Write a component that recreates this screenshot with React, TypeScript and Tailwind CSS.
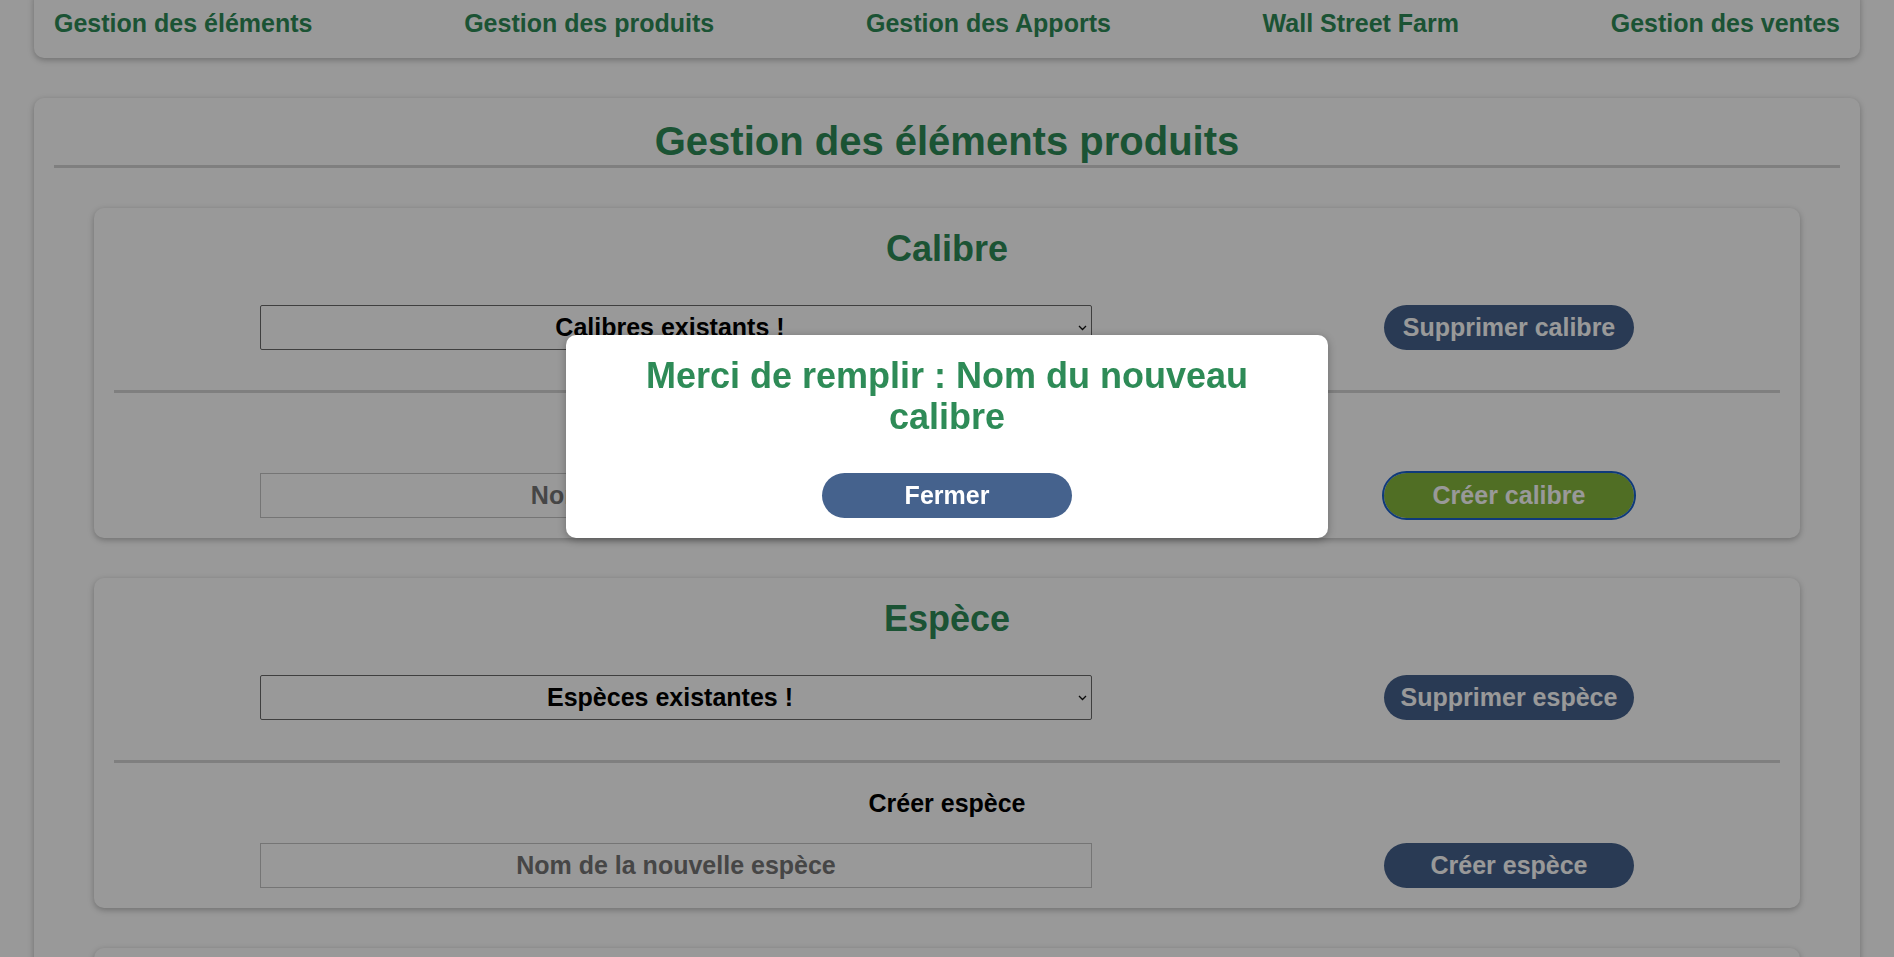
import React from "react";

type SectionProps = {
  title: string;
  selectLabel: string;
  deleteLabel: string;
  createTitle: string;
  createLabel: string;
  placeholder: string;
  focused?: boolean;
};

function Chevron() {
  return (
    <svg
      width="9"
      height="6"
      viewBox="0 0 9 6"
      className="pointer-events-none absolute right-[5px] top-1/2 -translate-y-1/2"
    >
      <path d="M1 1 L4.5 4.5 L8 1" fill="none" stroke="#111" strokeWidth="1.3" />
    </svg>
  );
}

function Section({ title, selectLabel, deleteLabel, createTitle, createLabel, placeholder, focused }: SectionProps) {
  return (
    <div className="mx-10 rounded-[10px] bg-white px-5 pb-5 pt-5 shadow-[0_2px_6px_rgba(0,0,0,0.28)]">
      <h2 className="text-center text-[36px] font-bold leading-[42px] text-[#2e8b57]">{title}</h2>
      <div className="mt-[35px] flex items-center justify-around">
        <div className="relative w-[832px]">
          <select className="h-[45px] w-full appearance-none rounded-[2px] border border-[#696969] bg-white pr-[12px] text-center text-[25px] font-bold text-black [text-align-last:center]">
            <option>{selectLabel}</option>
          </select>
          <Chevron />
        </div>
        <button className="h-[45px] w-[250px] rounded-full bg-[#45628d] text-[25px] font-bold text-white">
          {deleteLabel}
        </button>
      </div>
      <div className="mt-10 h-[3px] bg-[#d4d4d4]" />
      <div className="mt-[26px] text-center text-[25px] font-bold leading-[29px] text-black">{createTitle}</div>
      <div className="mt-[25px] flex items-center justify-around">
        <input
          className="h-[45px] w-[832px] border border-[#c4c4c4] bg-white text-center text-[25px] font-bold text-black placeholder:text-[#757575]"
          placeholder={placeholder}
        />
        <button
          className={
            focused
              ? "h-[45px] w-[250px] rounded-full bg-[#85b73c] text-[25px] font-bold text-white outline-2 outline-solid outline-[#1961cb]"
              : "h-[45px] w-[250px] rounded-full bg-[#45628d] text-[25px] font-bold text-white"
          }
        >
          {createLabel}
        </button>
      </div>
    </div>
  );
}

export default function App() {
  const nav = ["Gestion des éléments", "Gestion des produits", "Gestion des Apports", "Wall Street Farm", "Gestion des ventes"];
  return (
    <div className="relative min-h-[957px] overflow-hidden bg-white px-[34px] font-['Liberation_Sans',Arial,sans-serif]">
      <nav className="-mt-[11px] flex justify-between rounded-[10px] bg-white px-5 py-5 shadow-[0_2px_6px_rgba(0,0,0,0.28)]">
        {nav.map((n) => (
          <a key={n} className="text-[25px] font-bold leading-[29px] text-[#2e8b57]">
            {n}
          </a>
        ))}
      </nav>

      <main className="mt-10 rounded-[10px] bg-white px-5 pb-10 pt-5 shadow-[0_2px_6px_rgba(0,0,0,0.28)]">
        <h1 className="border-b-[3px] border-[#d4d4d4] pb-[1px] text-center text-[40px] font-bold leading-[46px] text-[#2e8b57]">
          Gestion des éléments produits
        </h1>
        <div className="mt-10 flex flex-col gap-10">
          <Section
            title="Calibre"
            selectLabel="Calibres existants !"
            deleteLabel="Supprimer calibre"
            createTitle="Créer calibre"
            createLabel="Créer calibre"
            placeholder="Nom du nouveau calibre"
            focused
          />
          <Section
            title="Espèce"
            selectLabel="Espèces existantes !"
            deleteLabel="Supprimer espèce"
            createTitle="Créer espèce"
            createLabel="Créer espèce"
            placeholder="Nom de la nouvelle espèce"
          />
          <Section
            title="Variété"
            selectLabel="Variétés existantes !"
            deleteLabel="Supprimer variété"
            createTitle="Créer variété"
            createLabel="Créer variété"
            placeholder="Nom de la nouvelle variété"
          />
        </div>
      </main>

      <div className="fixed inset-0 z-10 bg-black/40" />

      <div className="fixed left-1/2 top-[335px] z-20 w-[762px] -translate-x-1/2 rounded-[10px] bg-white px-10 pb-5 pt-[20px] shadow-[0_2px_8px_rgba(0,0,0,0.3)]">
        <h3 className="text-center text-[36px] font-bold leading-[41px] text-[#2e8b57]">
          Merci de remplir : Nom du nouveau calibre
        </h3>
        <div className="mt-[36px] flex justify-center">
          <button className="h-[45px] w-[250px] rounded-full bg-[#45628d] text-[25px] font-bold text-white">
            Fermer
          </button>
        </div>
      </div>
    </div>
  );
}
